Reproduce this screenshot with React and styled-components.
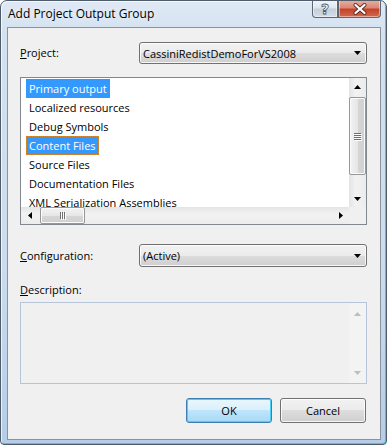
import styled, { createGlobalStyle } from "styled-components";

const GlobalStyle = createGlobalStyle`
    html, body {
        margin: 0;
        padding: 0;
        background: #ffffff;
    }
    body {
        font-family: "Open Sans", "Noto Sans", "DejaVu Sans", sans-serif;
        font-size: 11px;
        color: #000;
    }
`

const Window = styled.div`
    box-sizing: border-box;
    width: 387px;
    height: 445px;
    display: flex;
    flex-direction: column;
    border: 1px solid #4f5c6a;
    border-radius: 7px 7px 4px 4px;
    background: linear-gradient(to bottom, #dfe9f5 0%, #d3e1f0 8%, #cbdcee 60%, #b4cde8 100%);
    box-shadow: inset 1px 1px 0 rgba(255, 255, 255, 0.7), inset -1px -1px 0 #3dc6f0;
    overflow: hidden;
`

const TitleBar = styled.div`
    height: 26px;
    display: flex;
    justify-content: space-between;
    align-items: flex-start;
`

const Title = styled.div`
    padding: 4px 0 0 7px;
    font-size: 12px;
    text-shadow: 0 0 6px rgba(255, 255, 255, 0.9);
`

const Captions = styled.div`
    display: flex;
    margin: -1px 5px 0 0;
`

const CaptionButton = styled.div`
    box-sizing: border-box;
    width: ${props => props.$w}px;
    height: 18px;
    display: flex;
    align-items: center;
    justify-content: center;
    border: 1px solid #5d6671;
    border-top: none;
    background: ${props => props.$close
        ? "linear-gradient(to bottom, #eab0a3 0%, #d98876 45%, #c4432a 55%, #d4684c 100%)"
        : "linear-gradient(to bottom, #f3f6fa 0%, #dfe6ee 45%, #c5cfdb 55%, #d4dde8 100%)"};
    border-radius: ${props => props.$close ? "0 0 4px 0" : "0 0 0 4px"};
    box-shadow: inset 0 0 0 1px rgba(255, 255, 255, 0.45);
`

const HelpGlyph = styled.span`
    font-family: "DejaVu Sans", sans-serif;
    font-weight: bold;
    font-size: 14px;
    line-height: 1;
    color: #ffffff;
    margin-top: 1px;
    -webkit-text-stroke: 0.8px #4a5563;
`

const Client = styled.div`
    flex: 1;
    margin: 0 5px 4px 6px;
    border: 1px solid #8a939c;
    background: #f0f0f0;
    padding: 14px 13px 0 12px;
    display: flex;
    flex-direction: column;
`

const FieldRow = styled.div`
    display: flex;
    align-items: center;
    height: ${props => props.$h}px;
    margin-top: ${props => props.$top}px;
`

const Label = styled.div`
    width: 119px;
    flex-shrink: 0;
    line-height: 16px;
    margin-top: ${props => props.$top || 0}px;
`

const Combo = styled.div`
    flex: 1;
    height: 100%;
    box-sizing: border-box;
    display: flex;
    align-items: center;
    justify-content: space-between;
    padding: 0 5px 0 3px;
    border: 1px solid #707070;
    border-radius: 3px;
    background: linear-gradient(to bottom, #f2f2f2 0%, #ebebeb 50%, #dddddd 50%, #cfcfcf 100%);
    box-shadow: inset 0 0 0 1px rgba(255, 255, 255, 0.8);
`

const ListFrame = styled.div`
    margin-top: 13px;
    height: 148px;
    box-sizing: border-box;
    border: 1px solid #828790;
    background: #ffffff;
    display: grid;
    grid-template-columns: 1fr 17px;
    grid-template-rows: 1fr 17px;
`

const Items = styled.div`
    overflow: hidden;
    padding: 1px 0 0 5px;
`

const Item = styled.div`
    height: 19px;
    display: flex;
    align-items: center;
`

const ItemText = styled.span`
    box-sizing: border-box;
    height: 19px;
    line-height: 17px;
    padding: 0 2px;
    white-space: nowrap;
    border: 1px solid ${props => props.$focus ? "#d58a31" : "transparent"};
    border-style: ${props => props.$focus ? "dotted" : "solid"};
    background: ${props => props.$selected ? "#3399ff" : "transparent"};
    color: ${props => props.$selected ? "#ffffff" : "#000000"};
`

const VScroll = styled.div`
    display: flex;
    flex-direction: column;
    background: linear-gradient(to right, #e4e4e4, #f2f2f2 40%, #ececec);
`

const HScroll = styled.div`
    display: flex;
    background: linear-gradient(to bottom, #e4e4e4, #f2f2f2 40%, #ececec);
`

const Corner = styled.div`
    background: #f0f0f0;
`

const ArrowBox = styled.div`
    width: 17px;
    height: 17px;
    flex-shrink: 0;
    display: flex;
    align-items: center;
    justify-content: center;
`

const Track = styled.div`
    flex: 1;
    display: flex;
    flex-direction: ${props => props.$horizontal ? "row" : "column"};
    padding: ${props => props.$horizontal ? "0 0 0 2px" : "2px 0 0 0"};
`

const Thumb = styled.div`
    box-sizing: border-box;
    ${props => props.$horizontal
        ? "width: 45px; height: 17px;"
        : "width: 17px; height: 78px;"}
    border: 1px solid #979797;
    border-radius: 2px;
    background: ${props => props.$horizontal
        ? "linear-gradient(to bottom, #f3f3f3, #e6e6e6 50%, #d6d6d6 51%, #d0d0d0)"
        : "linear-gradient(to right, #f3f3f3, #e6e6e6 50%, #d6d6d6 51%, #d0d0d0)"};
    box-shadow: inset 0 0 0 1px #fbfbfb;
    display: flex;
    align-items: center;
    justify-content: center;
`

const Grip = styled.div`
    display: flex;
    flex-direction: ${props => props.$horizontal ? "row" : "column"};
    gap: 1px;
    span {
        display: block;
        background: #6f6f6f;
        box-shadow: 1px 1px 0 #fff;
        ${props => props.$horizontal ? "width: 1px; height: 7px;" : "width: 7px; height: 1px;"}
    }
`

const DescBox = styled.div`
    margin-top: 4px;
    height: 82px;
    box-sizing: border-box;
    border: 1px solid #b6c6d8;
    background: #f0f0f0;
    display: flex;
    justify-content: flex-end;
`

const DescScroll = styled.div`
    width: 17px;
    display: flex;
    flex-direction: column;
    justify-content: space-between;
    padding: 2px 0;
    background: #f3f3f3;
`

const Buttons = styled.div`
    margin-top: 14px;
    display: flex;
    justify-content: flex-end;
    gap: 8px;
    padding-right: 1px;
`

const Button = styled.div`
    box-sizing: border-box;
    width: 86px;
    height: 25px;
    display: flex;
    align-items: center;
    justify-content: center;
    border-radius: 3px;
    border: 1px solid ${props => props.$default ? "#3c7fb1" : "#707070"};
    background: ${props => props.$default
        ? "linear-gradient(to bottom, #eaf6fd 0%, #d9f0fc 50%, #bee6fd 50%, #a7d9f5 100%)"
        : "linear-gradient(to bottom, #f2f2f2 0%, #ebebeb 50%, #dddddd 50%, #cfcfcf 100%)"};
    box-shadow: ${props => props.$default
        ? "inset 0 0 0 1px #48d0f6"
        : "inset 0 0 0 1px rgba(255,255,255,0.8)"};
`

function Arrow({ dir, color = "#000" }) {
    const points = {
        up: "0,4 7,4 3.5,0",
        down: "0,0 7,0 3.5,4",
        left: "4,0 4,7 0,3.5",
        right: "0,0 0,7 4,3.5",
    }
    const vertical = dir === "up" || dir === "down"
    return (
        <svg width={vertical ? 7 : 4} height={vertical ? 4 : 7} viewBox={vertical ? "0 0 7 4" : "0 0 4 7"}>
            <polygon points={points[dir]} fill={color} />
        </svg>
    )
}

function CloseGlyph() {
    return (
        <svg width="16" height="12" viewBox="0 0 16 12">
            <path d="M3.5 2 L12.5 10 M12.5 2 L3.5 10" stroke="#5a2a22" strokeWidth="4" strokeLinecap="round" />
            <path d="M3.5 2 L12.5 10 M12.5 2 L3.5 10" stroke="#ffffff" strokeWidth="2.3" strokeLinecap="round" />
        </svg>
    )
}

const outputs = [
    "Primary output",
    "Localized resources",
    "Debug Symbols",
    "Content Files",
    "Source Files",
    "Documentation Files",
    "XML Serialization Assemblies",
]

function App() {
    return (
        <>
            <GlobalStyle />
            <Window>
                <TitleBar>
                    <Title>Add Project Output Group</Title>
                    <Captions>
                        <CaptionButton $w={26}><HelpGlyph>?</HelpGlyph></CaptionButton>
                        <CaptionButton $w={43} $close><CloseGlyph /></CaptionButton>
                    </Captions>
                </TitleBar>
                <Client>
                    <FieldRow $h={22} $top={0}>
                        <Label><u>P</u>roject:</Label>
                        <Combo>
                            <span>CassiniRedistDemoForVS2008</span>
                            <Arrow dir="down" />
                        </Combo>
                    </FieldRow>

                    <ListFrame>
                        <Items>
                            {outputs.map((name, i) => (
                                <Item key={name}>
                                    <ItemText $selected={i === 0 || i === 3} $focus={i === 3}>{name}</ItemText>
                                </Item>
                            ))}
                        </Items>
                        <VScroll>
                            <ArrowBox><Arrow dir="up" /></ArrowBox>
                            <Track>
                                <Thumb>
                                    <Grip><span /><span /><span /><span /></Grip>
                                </Thumb>
                            </Track>
                            <ArrowBox><Arrow dir="down" /></ArrowBox>
                        </VScroll>
                        <HScroll>
                            <ArrowBox><Arrow dir="left" /></ArrowBox>
                            <Track $horizontal>
                                <Thumb $horizontal>
                                    <Grip $horizontal><span /><span /><span /></Grip>
                                </Thumb>
                            </Track>
                            <ArrowBox><Arrow dir="right" /></ArrowBox>
                        </HScroll>
                        <Corner />
                    </ListFrame>

                    <FieldRow $h={23} $top={19}>
                        <Label><u>C</u>onfiguration:</Label>
                        <Combo>
                            <span>(Active)</span>
                            <Arrow dir="down" />
                        </Combo>
                    </FieldRow>

                    <Label $top={15}><u>D</u>escription:</Label>
                    <DescBox>
                        <DescScroll>
                            <ArrowBox><Arrow dir="up" color="#bdbdbd" /></ArrowBox>
                            <ArrowBox><Arrow dir="down" color="#bdbdbd" /></ArrowBox>
                        </DescScroll>
                    </DescBox>

                    <Buttons>
                        <Button $default>OK</Button>
                        <Button>Cancel</Button>
                    </Buttons>
                </Client>
            </Window>
        </>
    );
}

export default App;
